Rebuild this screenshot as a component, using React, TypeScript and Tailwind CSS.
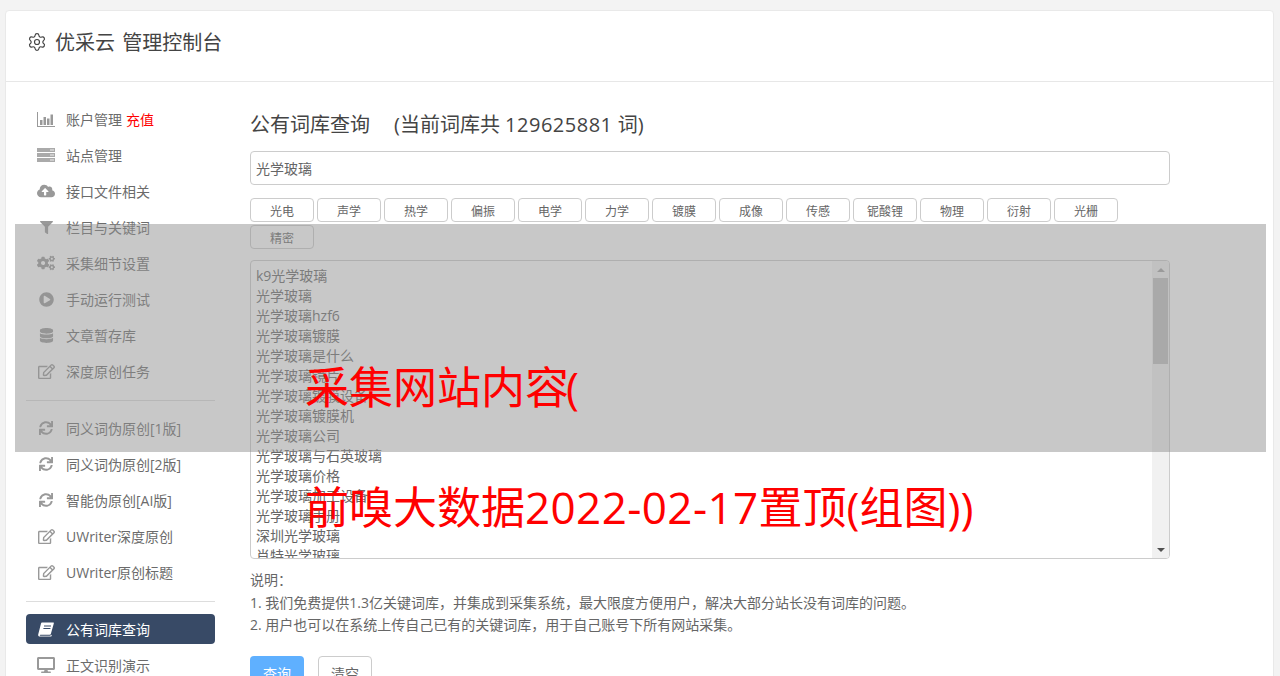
import { Settings } from "lucide-react";
import { FaCloudUploadAlt, FaFilter, FaCogs, FaPlayCircle, FaDatabase, FaRegEdit, FaSync, FaDesktop } from "react-icons/fa";
import type { ReactNode } from "react";

const Bars = () => (
  <svg width="18" height="15" viewBox="0 0 18 15" fill="currentColor">
    <path d="M0 0h1v14h17v1H0z" />
    <rect x="3" y="8" width="2.5" height="5" />
    <rect x="6.5" y="5" width="2.5" height="8" />
    <rect x="10" y="6.5" width="2.5" height="6.5" />
    <rect x="13.5" y="2.5" width="2.5" height="10.5" />
  </svg>
);

const ServerIcon = () => (
  <svg width="18" height="14" viewBox="0 0 18 14">
    <rect x="0" y="0" width="18" height="4" fill="#aaa" />
    <rect x="0" y="5" width="18" height="4" fill="#aaa" />
    <rect x="0" y="10" width="18" height="4" fill="#aaa" />
    <rect x="13" y="1.5" width="4" height="1" fill="#eee" />
    <rect x="13" y="6.5" width="4" height="1" fill="#eee" />
    <rect x="13" y="11.5" width="4" height="1" fill="#eee" />
  </svg>
);

const BookIcon = () => (
  <svg width="16" height="15" viewBox="0 0 16 15" fill="currentColor">
    <path d="M4 0.5h11.2c.6 0 .8.5.6 1L12.9 11.8c-.2.7-.6 1-1.3 1H2.4c-.7 0-.9.8-.1.9h10.2l.3-.9 1 .1-.4 1.3c-.1.3-.3.4-.6.4H2C.6 14.600 0 13.800.2 12.400L3 1.500C3.100.9 3.500.5 4 .5z" />
    <rect x="6" y="3.500" width="7" height="1" fill="#384a66" />
    <rect x="5.400" y="6" width="7" height="1" fill="#384a66" />
  </svg>
);

type Item = { icon: ReactNode; label: string; extra?: string; active?: boolean };

const group1: Item[] = [
  { icon: <Bars />, label: "账户管理", extra: "充值" },
  { icon: <ServerIcon />, label: "站点管理" },
  { icon: <FaCloudUploadAlt size={18} />, label: "接口文件相关" },
  { icon: <FaFilter size={13} />, label: "栏目与关键词" },
  { icon: <FaCogs size={18} />, label: "采集细节设置" },
  { icon: <FaPlayCircle size={15} />, label: "手动运行测试" },
  { icon: <FaDatabase size={15} />, label: "文章暂存库" },
  { icon: <FaRegEdit size={17} />, label: "深度原创任务" },
];
const group2: Item[] = [
  { icon: <FaSync size={14} />, label: "同义词伪原创[1版]" },
  { icon: <FaSync size={14} />, label: "同义词伪原创[2版]" },
  { icon: <FaSync size={14} />, label: "智能伪原创[AI版]" },
  { icon: <FaRegEdit size={17} />, label: "UWriter深度原创" },
  { icon: <FaRegEdit size={17} />, label: "UWriter原创标题" },
];
const group3: Item[] = [
  { icon: <BookIcon />, label: "公有词库查询", active: true },
  { icon: <FaDesktop size={18} />, label: "正文识别演示" },
];

const tags = ["光电", "声学", "热学", "偏振", "电学", "力学", "镀膜", "成像", "传感", "铌酸锂", "物理", "衍射", "光栅", "精密"];
const words = ["k9光学玻璃", "光学玻璃", "光学玻璃hzf6", "光学玻璃镀膜", "光学玻璃是什么", "光学玻璃镜片", "光学玻璃镀膜设备", "光学玻璃镀膜机", "光学玻璃公司", "光学玻璃与石英玻璃", "光学玻璃价格", "光学玻璃加工设备", "光学玻璃手册", "深圳光学玻璃", "肖特光学玻璃"];

function NavItem({ item }: { item: Item }) {
  return (
    <div className={`flex h-[30px] shrink-0 items-center rounded-[4px] mb-[6px] ${item.active ? "bg-[#384a66] text-white" : "text-[#6b6b6b]"}`}>
      <span className={`flex w-[40px] shrink-0 justify-center ${item.active ? "text-white" : "text-[#999]"}`}>{item.icon}</span>
      <span className="text-[14px] whitespace-nowrap">{item.label}</span>
      {item.extra && <span className="ml-[4px] text-[14px] text-[#f00]">{item.extra}</span>}
    </div>
  );
}

export default function App() {
  return (
    <div className="relative h-[676px] overflow-hidden bg-[#f3f3f3] pl-[5px] pr-[6px] pt-[10px] font-['Open_Sans','Noto_Sans_CJK_SC',sans-serif] text-[#666]">
      <div className="h-[700px] rounded-[4px] border border-[#e9e9e9] bg-white">
        <div className="flex h-[71px] items-center border-b border-[#e7e7e7] pb-[6px] pl-[21px] text-[#444]">
          <Settings size={20} strokeWidth={1.4} className="-mt-[2px]" />
          <span className="ml-[8px] text-[20px] [word-spacing:2px]">优采云 管理控制台</span>
        </div>
        <div className="flex">
          <aside className="w-[189px] shrink-0 ml-[20px] pt-[22px] flex flex-col">
            {group1.map((i) => <NavItem key={i.label} item={i} />)}
            <div className="mb-[12px] mt-[8px] h-px bg-[#ddd]" />
            {group2.map((i) => <NavItem key={i.label} item={i} />)}
            <div className="mb-[12px] mt-[8px] h-px bg-[#ddd]" />
            {group3.map((i) => <NavItem key={i.label} item={i} />)}
          </aside>
          <main className="ml-[35px] w-[920px] pt-[27px]">
            <div className="flex h-[32px] items-center text-[20px] text-[#444] whitespace-nowrap">
              <span>公有词库查询</span>
              <span className="ml-[24px]">(当前词库共 <span className="tracking-[0.5px]">129625881</span> 词)</span>
            </div>
            <div className="mt-[10px] flex h-[34px] items-center rounded-[4px] border border-[#ccc] px-[5px] text-[14px] text-[#666]">光学玻璃</div>
            <div className="mt-[13px] flex flex-wrap gap-[3px]">
              {tags.map((t) => (
                <div key={t} className="flex h-[24px] w-[64px] items-center justify-center rounded-[4px] border border-[#ccc] pt-[3px] text-[12px] text-[#666]">{t}</div>
              ))}
            </div>
            <div className="mt-[11px] flex h-[299px] overflow-hidden rounded-[4px] border border-[#ccc]">
              <div className="flex-1 overflow-hidden px-[5px] pt-[5px] text-[14px] leading-[20px] text-[#666]">
                {words.map((w) => <div key={w}>{w}</div>)}
              </div>
              <div className="flex w-[17px] flex-col items-center bg-[#f1f1f1]">
                <div className="flex h-[17px] w-full items-center justify-center">
                  <div className="border-x-[4px] border-b-[4px] border-x-transparent border-b-[#a3a3a3]" />
                </div>
                <div className="h-[86px] w-[15px] bg-[#c1c1c1]" />
                <div className="flex-1" />
                <div className="flex h-[17px] w-full items-center justify-center">
                  <div className="border-x-[4px] border-t-[4px] border-x-transparent border-t-[#505050]" />
                </div>
              </div>
            </div>
            <div className="mt-[10px] text-[14px] leading-[22.5px] text-[#666]">
              <div>说明：</div>
              <div>1. 我们免费提供1.3亿关键词库，并集成到采集系统，最大限度方便用户，解决大部分站长没有词库的问题。</div>
              <div>2. 用户也可以在系统上传自己已有的关键词库，用于自己账号下所有网站采集。</div>
            </div>
            <div className="mt-[19px] flex gap-[14px]">
              <div className="flex h-[36px] w-[54px] items-center justify-center rounded-[4px] bg-[#5fb0ff] text-[14px] text-white">查询</div>
              <div className="flex h-[36px] w-[54px] items-center justify-center rounded-[4px] border border-[#ccc] bg-white text-[14px] text-[#666]">清空</div>
            </div>
          </main>
        </div>
      </div>
      <div className="absolute left-[15px] top-[224px] h-[228px] w-[1251px] bg-[rgba(145,145,145,0.5)]" />
      <div className="absolute left-[305px] top-[327px] whitespace-nowrap text-[44px] leading-[120px] text-[#f00]">
        <div>采集网站内容<span className="-ml-[3px]">(</span></div>
        <div>前嗅大数据<span className="tracking-[0.4px]">2022-02-17</span>置顶(组图))</div>
      </div>
    </div>
  );
}
